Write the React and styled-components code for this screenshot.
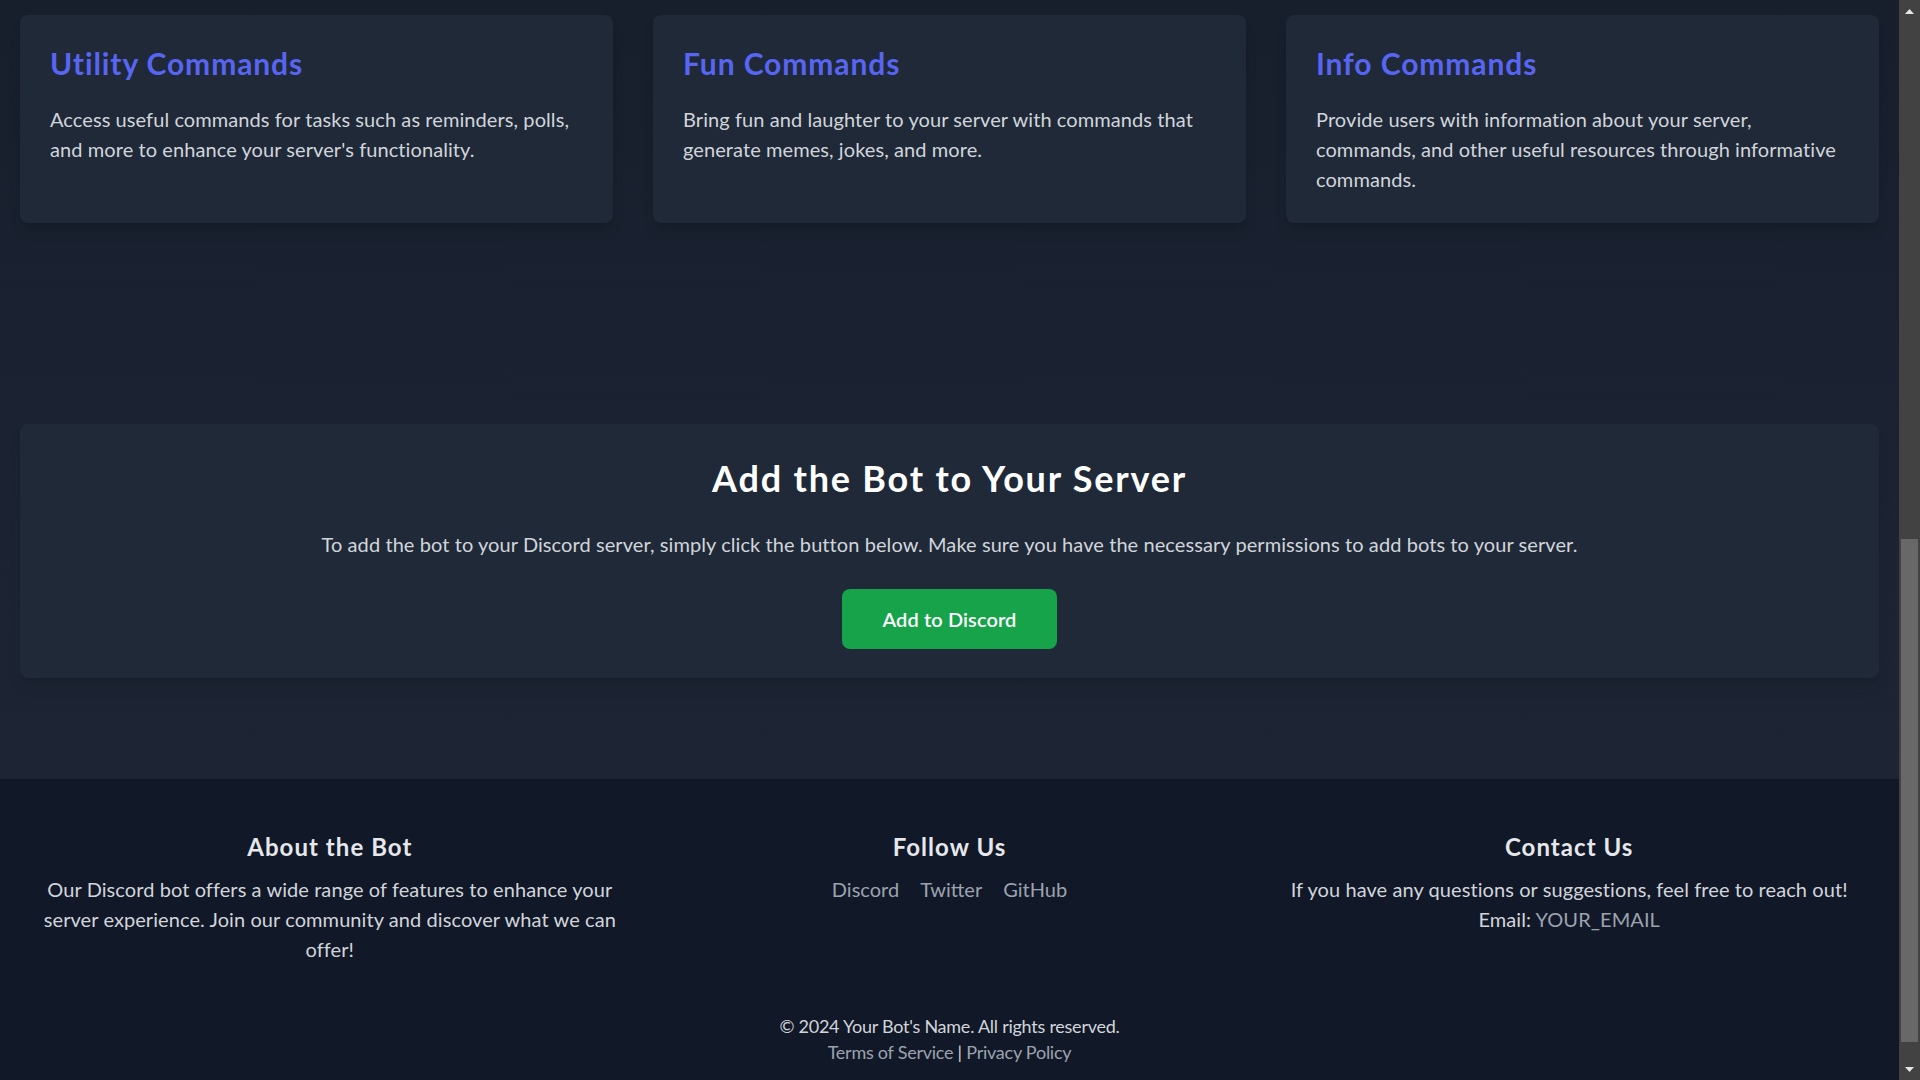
import React from 'react';
import styled, { createGlobalStyle } from 'styled-components';

const GlobalStyle = createGlobalStyle`
  html, body {
    margin: 0;
    height: 100%;
    overflow: hidden;
    background: #111827;
  }
  body {
    font-family: Lato, "Open Sans", sans-serif;
    color: #d1d5db;
  }
  * { box-sizing: border-box; }
  a { text-decoration: none; }
`;

const Shell = styled.div`
  display: flex;
  height: 100vh;
  overflow: hidden;
`;

const Content = styled.div`
  flex: 1;
  min-width: 0;
  display: flex;
  flex-direction: column;
`;

// the window's scrollbar, drawn at the end of the page
const ScrollRail = styled.div`
  width: 21px;
  flex-shrink: 0;
  display: flex;
  flex-direction: column;
  background: #424242;
`;

const ArrowButton = styled.div`
  height: 21px;
  display: flex;
  align-items: center;
  justify-content: center;
  padding-top: ${p => p.$down ? '0' : '1px'};
`;

const ScrollTrack = styled.div`
  flex: 1;
  display: flex;
  flex-direction: column;
  justify-content: flex-end;
  padding: 0 2px 17px;
`;

const ScrollThumb = styled.div`
  height: 503px;
  background: #686868;
`;

const Main = styled.main`
  padding: 15px 20px 101px;
  background: linear-gradient(180deg, #171e2c 0%, #1b2332 60%, #1d2534 100%);
`;

const FeatureGrid = styled.section`
  display: grid;
  grid-template-columns: repeat(3, 1fr);
  gap: 40px;
`;

const Card = styled.div`
  background: #1f2937;
  border-radius: 8px;
  padding: 30px 38px 29px 30px;
  box-shadow: 0 10px 15px -3px rgba(0, 0, 0, 0.12), 0 4px 6px -4px rgba(0, 0, 0, 0.12);
`;

const CardTitle = styled.h3`
  margin: 0 0 23px;
  font-size: 30px;
  line-height: 36px;
  font-weight: 700;
  letter-spacing: 0.9px;
  color: #5865f2;
`;

const Text = styled.p`
  margin: 0;
  font-size: 20px;
  line-height: 30px;
  letter-spacing: 0.08px;
  color: #d1d5db;
`;

const AddSection = styled.section`
  margin-top: 201px;
  background: #1f2937;
  border-radius: 8px;
  padding: 32px 32px 29px;
  text-align: center;
  box-shadow: 0 10px 15px -3px rgba(0, 0, 0, 0.12), 0 4px 6px -4px rgba(0, 0, 0, 0.12);
`;

const AddTitle = styled.h2`
  margin: 0 0 29px;
  font-size: 36px;
  line-height: 44px;
  font-weight: 700;
  letter-spacing: 1.8px;
  color: #ffffff;
`;

const AddButton = styled.a`
  display: inline-block;
  margin-top: 30px;
  padding: 16px 41px;
  border-radius: 8px;
  background: #16a34a;
  color: #ffffff;
  font-size: 20px;
  line-height: 28px;
  font-weight: 600;
  letter-spacing: 0.1px;
  cursor: pointer;
`;

const Footer = styled.footer`
  flex: 1;
  background: #111827;
  padding: 52px 20px 15px;
`;

const FooterGrid = styled.div`
  display: grid;
  grid-template-columns: repeat(3, 1fr);
`;

const FooterCol = styled.div`
  padding: 0 16px;
  text-align: center;
`;

const FooterTitle = styled.h4`
  margin: 0 0 11px;
  font-size: 24px;
  line-height: 32px;
  font-weight: 700;
  letter-spacing: 1.05px;
  color: #e5e7eb;
`;

const SocialLinks = styled.div`
  display: flex;
  justify-content: center;
  gap: 21px;
`;

const FooterLink = styled.a`
  color: #9ca3af;
  font-size: ${p => p.$small ? '18px' : '20px'};
  line-height: ${p => p.$small ? '26px' : '30px'};
  cursor: pointer;
`;

const Bottom = styled.div`
  margin-top: 49px;
  text-align: center;
  font-size: 18px;
  line-height: 26px;
  letter-spacing: -0.25px;
  color: #d1d5db;
`;

const BottomLine = styled.div``;

const features = [
  {
    title: 'Utility Commands',
    text: "Access useful commands for tasks such as reminders, polls, and more to enhance your server's functionality.",
  },
  {
    title: 'Fun Commands',
    text: 'Bring fun and laughter to your server with commands that generate memes, jokes, and more.',
  },
  {
    title: 'Info Commands',
    text: 'Provide users with information about your server, commands, and other useful resources through informative commands.',
  },
];

const Arrow = ({ down }) => (
  <svg width="9" height="5" viewBox="0 0 9 5">
    <polygon points={down ? '0,0 9,0 4.5,5' : '4.5,0 9,5 0,5'} fill="#e6e6e6" />
  </svg>
);

export default function App() {
  return (
    <>
      <GlobalStyle />
      <Shell>
        <Content>
          <Main>
            <FeatureGrid>
              {features.map(f => (
                <Card key={f.title}>
                  <CardTitle>{f.title}</CardTitle>
                  <Text>{f.text}</Text>
                </Card>
              ))}
            </FeatureGrid>

            <AddSection>
              <AddTitle>Add the Bot to Your Server</AddTitle>
              <Text>
                To add the bot to your Discord server, simply click the button below. Make sure you have the necessary permissions to add bots to your server.
              </Text>
              <AddButton>Add to Discord</AddButton>
            </AddSection>
          </Main>

          <Footer>
            <FooterGrid>
              <FooterCol>
                <FooterTitle>About the Bot</FooterTitle>
                <Text>
                  Our Discord bot offers a wide range of features to enhance your server experience. Join our community and discover what we can offer!
                </Text>
              </FooterCol>
              <FooterCol>
                <FooterTitle>Follow Us</FooterTitle>
                <SocialLinks>
                  <FooterLink>Discord</FooterLink>
                  <FooterLink>Twitter</FooterLink>
                  <FooterLink>GitHub</FooterLink>
                </SocialLinks>
              </FooterCol>
              <FooterCol>
                <FooterTitle>Contact Us</FooterTitle>
                <Text>If you have any questions or suggestions, feel free to reach out!</Text>
                <Text>
                  Email: <FooterLink>YOUR_EMAIL</FooterLink>
                </Text>
              </FooterCol>
            </FooterGrid>

            <Bottom>
              <BottomLine>© 2024 Your Bot's Name. All rights reserved.</BottomLine>
              <BottomLine>
                <FooterLink $small>Terms of Service</FooterLink> | <FooterLink $small>Privacy Policy</FooterLink>
              </BottomLine>
            </Bottom>
          </Footer>
        </Content>

        <ScrollRail>
          <ArrowButton><Arrow /></ArrowButton>
          <ScrollTrack>
            <ScrollThumb />
          </ScrollTrack>
          <ArrowButton $down><Arrow down /></ArrowButton>
        </ScrollRail>
      </Shell>
    </>
  );
}
